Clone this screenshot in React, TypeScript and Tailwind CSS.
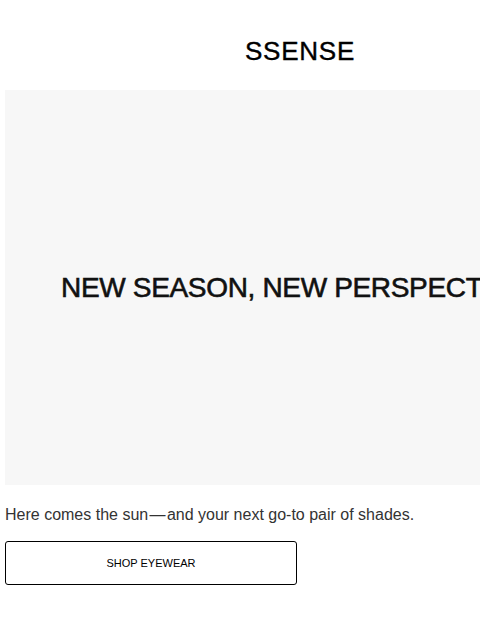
export default function App() {
  return (
    <div className="w-[480px] h-[640px] overflow-hidden bg-white" style={{ fontFamily: '"Liberation Sans", Arial, sans-serif' }}>
      <div className="w-[600px] px-[5px]">
        <header className="flex justify-center pt-[38px]">
          <span className="text-[26px] leading-none tracking-[0.03em] text-black [-webkit-text-stroke:0.4px_black]">SSENSE</span>
        </header>

        <section className="mt-[26px] h-[395px] bg-[#f7f7f7] flex items-center justify-center">
          <h1 className="text-[28px] leading-none tracking-[-0.012em] text-[#111] whitespace-nowrap pl-[6px] [-webkit-text-stroke:0.6px_#111]">
            NEW SEASON, NEW PERSPECTIVES
          </h1>
        </section>

        <p className="mt-[18px] text-[16px] leading-6 text-[#333]">
          Here comes the sun{'\u200A'}—{'\u200A'}and your next go-to pair of shades.
        </p>

        <button className="mt-[14px] w-[292px] h-[44px] border border-black rounded-[3px] text-[11px] text-black flex items-center justify-center">
          SHOP EYEWEAR
        </button>
      </div>
    </div>
  );
}
